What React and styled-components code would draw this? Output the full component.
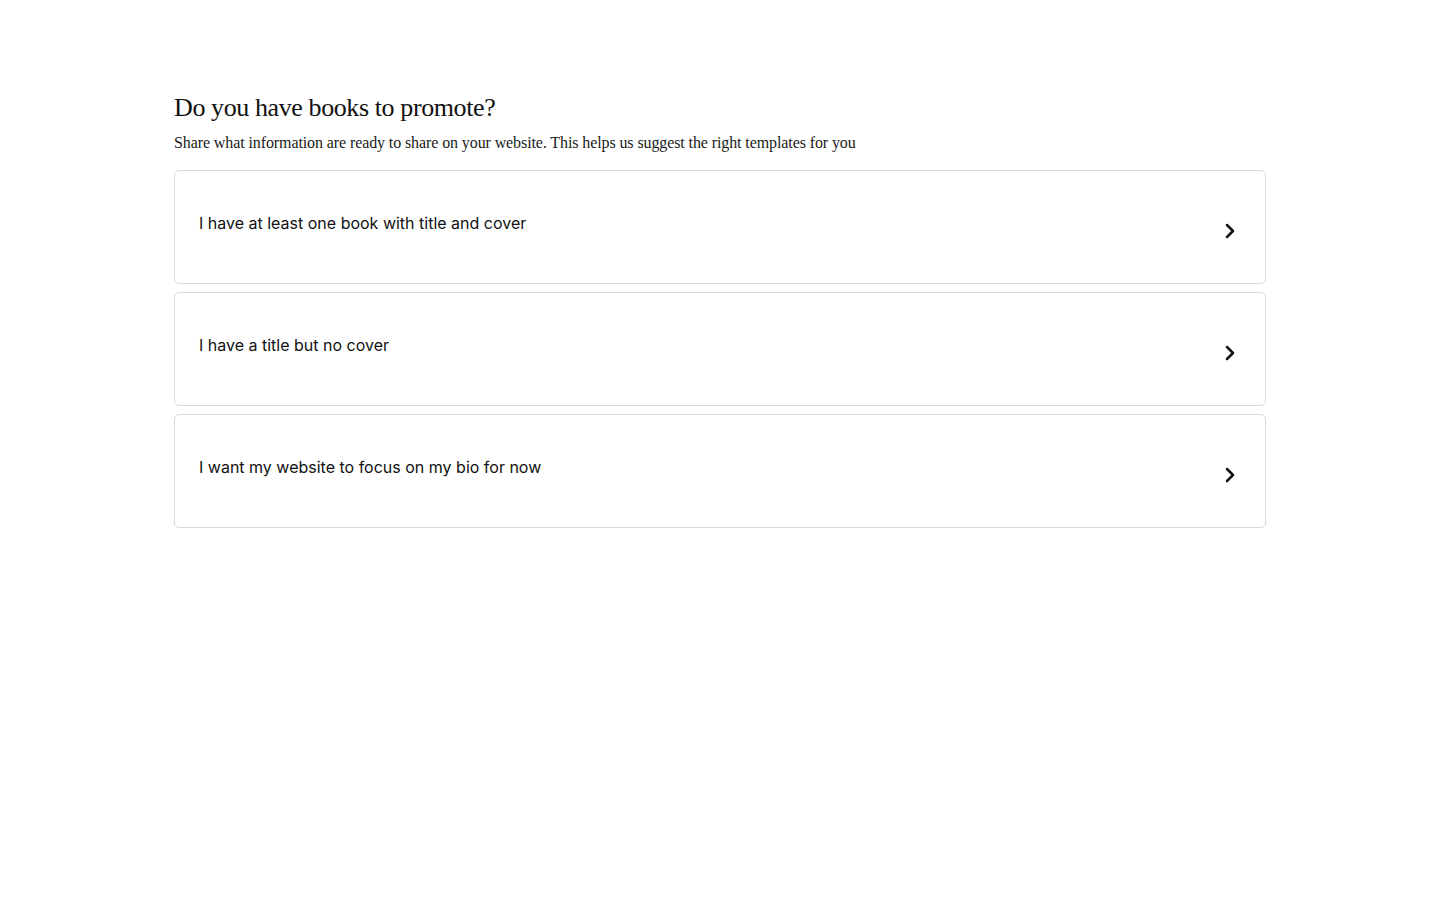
import styled, { createGlobalStyle } from "styled-components";
import { ChevronRight } from "lucide-react";

const GlobalStyle = createGlobalStyle`
  body {
    margin: 0;
    background: #ffffff;
    font-family: Inter, "Liberation Sans", sans-serif;
  }
`;

const Page = styled.div`
  width: 1092px;
  margin: 0 auto;
  padding-top: 92px;
`;

const Title = styled.h1`
  margin: 0;
  font-family: "Liberation Serif", "DejaVu Serif", serif;
  font-weight: 400;
  font-size: 26px;
  line-height: 32px;
  letter-spacing: -0.4px;
  color: #111111;
`;

const Subtitle = styled.p`
  margin: 7px 0 0;
  font-family: "Liberation Serif", "DejaVu Serif", serif;
  font-size: 16px;
  line-height: 24px;
  letter-spacing: -0.1px;
  color: #1a1a1a;
`;

const Options = styled.div`
  margin-top: 15px;
  display: flex;
  flex-direction: column;
  gap: 8px;
`;

const Option = styled.button`
  display: flex;
  align-items: center;
  justify-content: space-between;
  width: 100%;
  height: 114px;
  padding: 0 23px 0 24px;
  background: #ffffff;
  border: 1px solid #d9d9d9;
  border-radius: 5px;
  cursor: pointer;
  text-align: left;
  &:hover {
    border-color: #b5b5b5;
  }
`;

const Label = styled.span`
  font-family: Inter, "Liberation Sans", sans-serif;
  font-size: 16px;
  line-height: 24px;
  color: #111111;
  padding-bottom: 8px;
`;

const Arrow = styled(ChevronRight)`
  margin-top: 8px;
  color: #111111;
`;

const options = [
  "I have at least one book with title and cover",
  "I have a title but no cover",
  "I want my website to focus on my bio for now",
];

export default function App() {
  return (
    <>
      <GlobalStyle />
      <Page>
        <Title>Do you have books to promote?</Title>
        <Subtitle>
          Share what information are ready to share on your website. This helps us suggest the right templates for you
        </Subtitle>
        <Options>
          {options.map((o) => (
            <Option key={o}>
              <Label>{o}</Label>
              <Arrow size={24} strokeWidth={2.5} />
            </Option>
          ))}
        </Options>
      </Page>
    </>
  );
}
